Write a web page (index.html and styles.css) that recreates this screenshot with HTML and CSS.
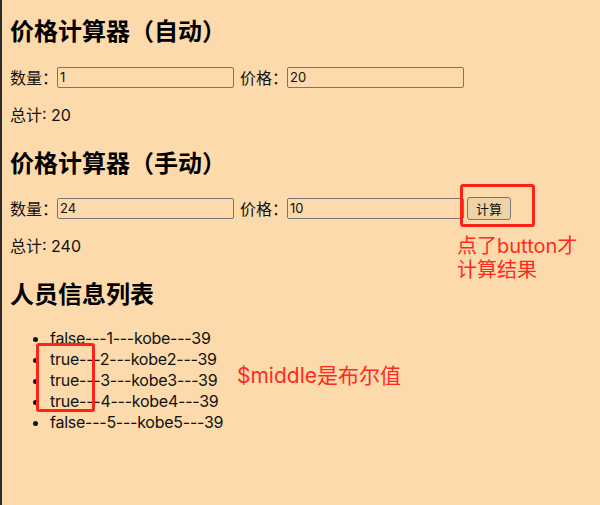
FILE: index.html
```html
<!DOCTYPE html>
<html lang="zh-CN">
<head>
<meta charset="utf-8">
<title>价格计算器</title>
<link rel="stylesheet" href="styles.css">
</head>
<body>
  <div class="app">
    <h2 class="title">价格计算器（自动）</h2>
    <div class="row">
      <span class="label">数量：</span><input class="field" type="text" value="1">
      <span class="label sp">价格：</span><input class="field" type="text" value="20">
    </div>
    <p class="total">总计: 20</p>

    <h2 class="title gap">价格计算器（手动）</h2>
    <div class="row">
      <span class="label">数量：</span><input class="field" type="text" value="24">
      <span class="label sp">价格：</span><input class="field" type="text" value="10">
      <button class="btn" type="button">计算</button>
    </div>
    <p class="total">总计: 240</p>

    <h2 class="title gap2">人员信息列表</h2>
    <ul class="list">
      <li>false---1---kobe---39</li>
      <li>true---2---kobe2---39</li>
      <li>true---3---kobe3---39</li>
      <li>true---4---kobe4---39</li>
      <li>false---5---kobe5---39</li>
    </ul>
  </div>

  <div class="mark mark-btn"></div>
  <div class="note note-btn">点了button才<br>计算结果</div>
  <div class="mark mark-list"></div>
  <div class="note note-list">$middle是布尔值</div>
</body>
</html>
```

FILE: styles.css
```css
html {
  background: #fcdaab;
}
body {
  margin: 0;
  min-height: 505px;
  box-sizing: border-box;
  border-left: 2px solid #2c2c2c;
  padding: 14px 8px 0 8px;
  font-family: Inter, "Noto Sans CJK SC", sans-serif;
  font-size: 16px;
  color: #111;
  position: relative;
}
.app {
  display: flex;
  flex-direction: column;
}
.title {
  margin: 0 0 20px 0;
  font-size: 24px;
  line-height: 32px;
  font-weight: 700;
  font-family: "Noto Sans CJK SC", sans-serif;
  color: #000;
}
.title.gap {
  margin-top: 20px;
  margin-bottom: 19px;
}
.title.gap2 {
  margin-top: 20px;
  margin-bottom: 19px;
}
.row {
  display: flex;
  align-items: center;
  height: 22px;
}
.label {
  font-family: "Noto Sans CJK SC", sans-serif;
  line-height: 21px;
  margin-right: -1px;
}
.label.sp {
  margin-left: 6px;
}
.field {
  box-sizing: border-box;
  width: 177px;
  height: 21px;
  border: 1px solid #767676;
  border-radius: 2px;
  background: transparent;
  padding: 1px 2px;
  font-family: Inter, "Noto Sans CJK SC", sans-serif;
  font-size: 13px;
  color: #111;
}
.btn {
  box-sizing: border-box;
  margin-left: 3px;
  width: 44px;
  height: 23px;
  border: 1px solid #767676;
  border-radius: 3px;
  background: #efd3a8;
  font-family: "Noto Sans CJK SC", sans-serif;
  font-size: 13px;
  color: #111;
  padding: 0;
}
.total {
  margin: 17px 0 0 0;
  line-height: 21px;
  height: 21px;
}
.list {
  margin: 0;
  padding-left: 40px;
}
.list li {
  line-height: 21px;
  letter-spacing: -0.25px;
}
.mark {
  position: absolute;
  border: 3px solid #ff2317;
  border-radius: 3px;
  box-sizing: border-box;
}
.mark-btn {
  left: 458px;
  top: 184px;
  width: 75px;
  height: 43px;
}
.mark-list {
  left: 34px;
  top: 343px;
  width: 59px;
  height: 69px;
}
.note {
  position: absolute;
  color: #ff2a1f;
  font-family: Inter, "Noto Sans CJK SC", sans-serif;
}
.note-btn {
  left: 455px;
  top: 234px;
  font-size: 20px;
  line-height: 24px;
}
.note-list {
  left: 235px;
  top: 362px;
  font-size: 21px;
  line-height: 28px;
}
```
